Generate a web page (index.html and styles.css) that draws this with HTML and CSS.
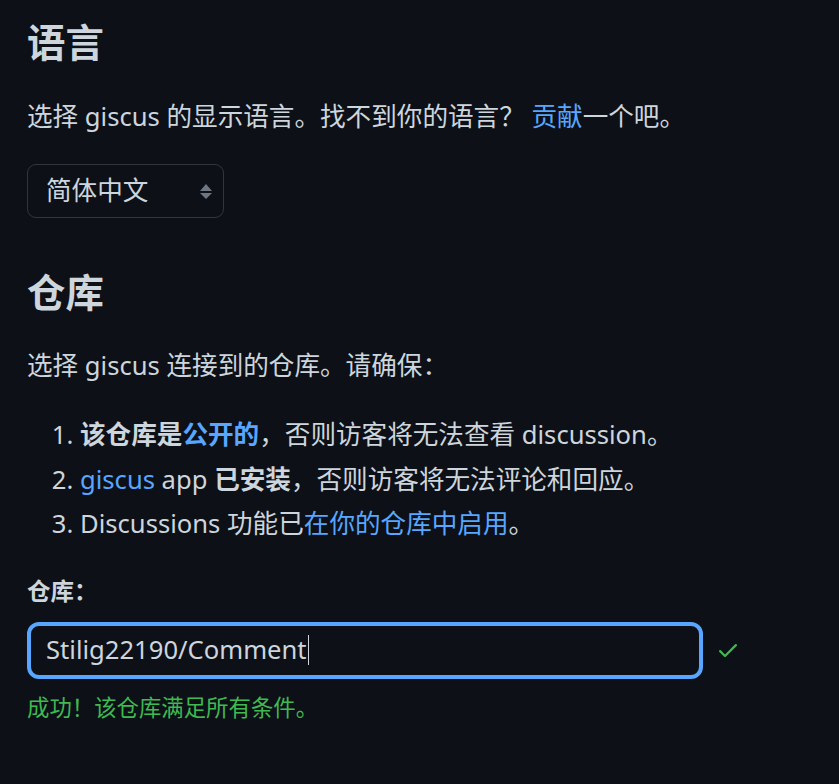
FILE: index.html
```html
<!DOCTYPE html>
<html lang="zh-CN">
<head>
<meta charset="utf-8">
<title>giscus 配置</title>
<link rel="stylesheet" href="styles.css">
</head>
<body>
<main class="page">
  <h2 class="title">语言</h2>
  <p class="desc">选择 giscus 的显示语言。找不到你的语言？ <a class="link" href="#">贡献</a>一个吧。</p>
  <div class="select">
    <span class="select-text">简体中文</span>
    <svg class="select-arrow" width="12" height="15" viewBox="0 0 12 15" aria-hidden="true">
      <path d="M6 0 L12 7 H0 Z" fill="#6e7681"/>
      <path d="M0 9 H12 L6 15 Z" fill="#6e7681"/>
    </svg>
  </div>

  <h2 class="title title-repo">仓库</h2>
  <p class="desc desc-repo">选择 giscus 连接到的仓库。请确保：</p>
  <ol class="reqs">
    <li><strong>该仓库是<a class="link" href="#">公开的</a></strong>，否则访客将无法查看 discussion。</li>
    <li><a class="link" href="#">giscus</a> app <strong>已安装</strong>，否则访客将无法评论和回应。</li>
    <li>Discussions 功能已<a class="link" href="#">在你的仓库中启用</a>。</li>
  </ol>

  <div class="label">仓库：</div>
  <div class="field-row">
    <div class="input"><span class="input-text">Stilig22190/Comment</span><span class="caret"></span></div>
    <svg class="check" width="24" height="24" viewBox="0 0 16 16" aria-hidden="true">
      <path fill="#3fb950" d="M13.78 4.22a.75.75 0 0 1 0 1.06l-7.25 7.25a.75.75 0 0 1-1.06 0L2.22 9.28a.751.751 0 0 1 .018-1.042.751.751 0 0 1 1.042-.018L6 10.94l6.72-6.72a.75.75 0 0 1 1.06 0Z"/>
    </svg>
  </div>
  <p class="success">成功！该仓库满足所有条件。</p>
</main>
</body>
</html>
```

FILE: styles.css
```css
html, body {
  margin: 0;
  padding: 0;
  background: #0d1117;
}

body {
  color: #cdd5dd;
  font-family: "Noto Sans", "Noto Sans CJK SC", sans-serif;
  font-size: 25.6px;
  line-height: 38.4px;
}

.page {
  padding: 0 27px;
  overflow: hidden;
}

.title {
  margin: 18px 0 0;
  font-size: 38.4px;
  line-height: 48px;
  font-weight: 700;
}

.title-repo {
  margin-top: 50px;
}

.desc {
  margin: 32px 0 0;
}

.desc-repo {
  margin-top: 31px;
}

.link {
  color: #58a6ff;
  text-decoration: none;
}

strong {
  font-weight: 700;
}

.select {
  margin-top: 28px;
  width: 197px;
  height: 54px;
  box-sizing: border-box;
  border: 1px solid #30363d;
  border-radius: 9px;
  display: flex;
  align-items: center;
  justify-content: space-between;
  padding: 0 11px 0 18px;
}

.select-text {
  line-height: 38px;
}

.select-arrow {
  display: block;
}

.reqs {
  margin: 30px 0 0;
  padding-left: 53px;
}

.reqs li + li {
  margin-top: 6.4px;
}

.label {
  margin-top: 30px;
  font-size: 23.5px;
  line-height: 35px;
  font-weight: 700;
}

.field-row {
  margin-top: 13px;
  display: flex;
  align-items: center;
  gap: 13px;
}

.input {
  width: 676px;
  height: 57px;
  box-sizing: border-box;
  border: 4px solid #58a6ff;
  border-radius: 12px;
  padding: 0 15px;
  display: flex;
  align-items: center;
}

.input-text {
  color: #cdd5dd;
}

.caret {
  display: inline-block;
  width: 1px;
  height: 30px;
  margin-left: 1px;
  background: #cdd5dd;
}

.check {
  display: block;
}

.success {
  margin: 13px 0 0;
  color: #3fb950;
  font-size: 22.4px;
  line-height: 32px;
}
```
